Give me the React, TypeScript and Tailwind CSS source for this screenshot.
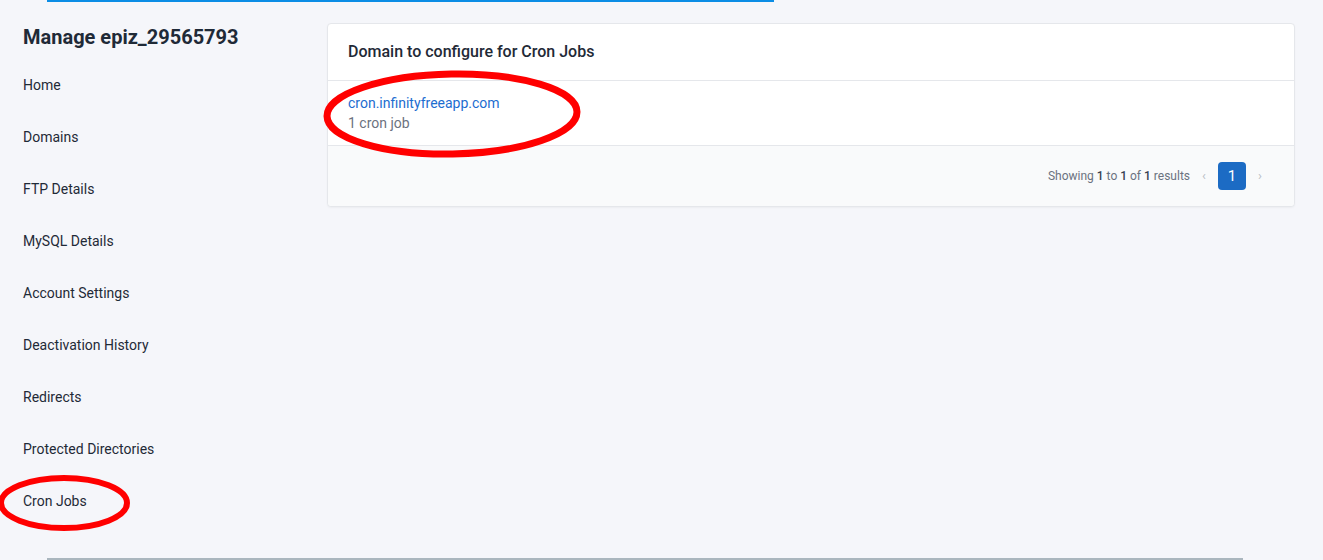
import React from "react";

const navItems = [
  "Home",
  "Domains",
  "FTP Details",
  "MySQL Details",
  "Account Settings",
  "Deactivation History",
  "Redirects",
  "Protected Directories",
  "Cron Jobs",
];

function Sidebar() {
  return (
    <div className="w-[304px] shrink-0">
      <h1 className="text-[20px] leading-[28px] font-bold text-[#1f2a37]">Manage epiz_29565793</h1>
      <nav className="mt-2 flex flex-col">
        {navItems.map((item) => (
          <a key={item} className="py-4 text-[14px] leading-5 text-[#1f2a37]">
            {item}
          </a>
        ))}
      </nav>
    </div>
  );
}

function DomainCard() {
  return (
    <div className="flex-1 h-fit rounded border border-[#e5e7eb] bg-white shadow-[0_1px_2px_rgba(0,0,0,0.04)]">
      {/* header */}
      <div className="border-b border-[#e5e7eb] px-5 py-4">
        <h2 className="text-[16px] leading-6 font-medium text-[#1f2a37]">Domain to configure for Cron Jobs</h2>
      </div>

      {/* row */}
      <div className="border-b border-[#e5e7eb] px-5 py-3">
        <a className="block text-[14px] leading-5 text-[#1c6dd0]">cron.infinityfreeapp.com</a>
        <div className="text-[14px] leading-5 text-[#6b7280]">1 cron job</div>
      </div>

      {/* footer */}
      <div className="flex items-center justify-end bg-[#f9fafb] px-5 py-4 rounded-b">
        <p className="text-[12px] text-[#6b7280]">
          Showing <span className="font-medium text-[#374151]">1</span> to{" "}
          <span className="font-medium text-[#374151]">1</span> of{" "}
          <span className="font-medium text-[#374151]">1</span> results
        </p>
        <div className="flex items-center">
          <span className="flex h-7 w-7 items-center justify-center text-[13px] text-[#b8bdc5]">‹</span>
          <span className="flex h-7 w-7 items-center justify-center rounded bg-[#1c6bc4] text-[15px] text-white">1</span>
          <span className="flex h-7 w-7 items-center justify-center text-[13px] text-[#b8bdc5]">›</span>
        </div>
      </div>
    </div>
  );
}

export default function App() {
  return (
    <div
      className="relative flex min-h-[560px] flex-col overflow-hidden bg-[#f5f6fa]"
      style={{ fontFamily: "Roboto, 'Noto Sans', sans-serif" }}
    >
      {/* loading bar */}
      <div className="ml-[47px] h-[2px] w-[727px] bg-[#0b8de5]" />

      <div className="flex flex-1 pl-[23px] pr-[28px] pt-[21px]">
        <Sidebar />
        <DomainCard />
      </div>

      <div className="ml-[47px] h-[2px] w-[1196px] bg-[#aab6be]" />

      {/* red annotation marks */}
      <svg className="pointer-events-none absolute left-0 top-0" width="1323" height="560">
        <ellipse cx="452" cy="114" rx="125" ry="40" fill="none" stroke="#ff0000" strokeWidth="7" transform="rotate(-1 452 114)" />
        <ellipse cx="64" cy="503" rx="63" ry="25" fill="none" stroke="#ff0000" strokeWidth="6" />
      </svg>
    </div>
  );
}
